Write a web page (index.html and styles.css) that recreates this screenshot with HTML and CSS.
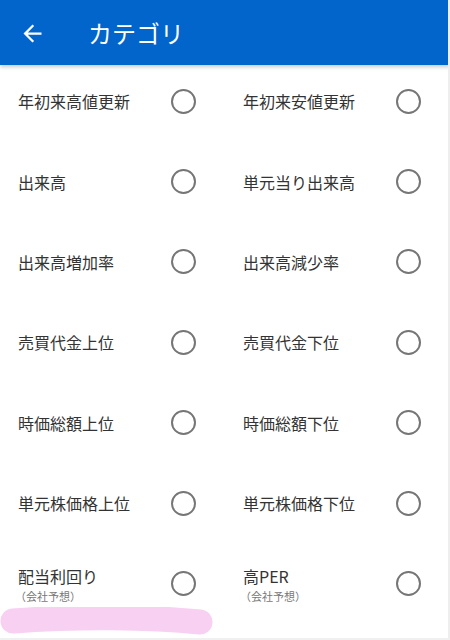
FILE: index.html
```html
<!DOCTYPE html>
<html lang="ja">
<head>
<meta charset="utf-8">
<link rel="stylesheet" href="styles.css">
</head>
<body>
<div class="app">
  <header class="bar">
    <svg class="back" viewBox="0 0 24 24" aria-hidden="true"><path d="M20 11H7.83l5.59-5.59L12 4l-8 8 8 8 1.41-1.41L7.83 13H20v-2z" fill="#fff"/></svg>
    <h1 class="title">カテゴリ</h1>
  </header>
  <main class="list">
    <div class="cell"><div class="label"><div class="main">年初来高値更新</div></div><span class="radio"></span></div>
    <div class="cell"><div class="label"><div class="main">年初来安値更新</div></div><span class="radio"></span></div>
    <div class="cell"><div class="label"><div class="main">出来高</div></div><span class="radio"></span></div>
    <div class="cell"><div class="label"><div class="main">単元当り出来高</div></div><span class="radio"></span></div>
    <div class="cell"><div class="label"><div class="main">出来高増加率</div></div><span class="radio"></span></div>
    <div class="cell"><div class="label"><div class="main">出来高減少率</div></div><span class="radio"></span></div>
    <div class="cell"><div class="label"><div class="main">売買代金上位</div></div><span class="radio"></span></div>
    <div class="cell"><div class="label"><div class="main">売買代金下位</div></div><span class="radio"></span></div>
    <div class="cell"><div class="label"><div class="main">時価総額上位</div></div><span class="radio"></span></div>
    <div class="cell"><div class="label"><div class="main">時価総額下位</div></div><span class="radio"></span></div>
    <div class="cell"><div class="label"><div class="main">単元株価格上位</div></div><span class="radio"></span></div>
    <div class="cell"><div class="label"><div class="main">単元株価格下位</div></div><span class="radio"></span></div>
    <div class="cell"><div class="label two"><div class="main">配当利回り</div><div class="sub">（会社予想）</div></div><span class="radio"></span></div>
    <div class="cell"><div class="label two"><div class="main">高PER</div><div class="sub">（会社予想）</div></div><span class="radio"></span></div>
  </main>
  <svg class="marker" viewBox="0 0 220 40" aria-hidden="true"><path d="M13 14 C 80 9, 150 10, 200 15" stroke="#f7d0f2" stroke-width="25" stroke-linecap="round" fill="none"/></svg>
</div>
</body>
</html>
```
FILE: styles.css
```css
html, body {
  margin: 0;
  padding: 0;
  background: #fff;
}
.app {
  position: relative;
  width: 450px;
  height: 640px;
  overflow: hidden;
  box-sizing: border-box;
  border-right: 2px solid #eeeeee;
  border-bottom: 2px solid #f0f0f0;
  font-family: "Noto Sans CJK JP", "Noto Sans", sans-serif;
}
.bar {
  height: 65px;
  background: #0165cc;
  display: flex;
  align-items: center;
  box-shadow: 0 2px 4px rgba(0,0,0,0.22);
  position: relative;
  z-index: 1;
  margin-right: -2px;
}
.back {
  width: 27px;
  height: 27px;
  margin-left: 19px;
  margin-top: 1px;
}
.title {
  margin: 0 0 0 42px;
  font-size: 24px;
  font-weight: 400;
  color: #fff;
  line-height: 30px;
}
.list {
  display: grid;
  grid-template-columns: 225px 225px;
  grid-auto-rows: 80.4px;
}
.cell {
  display: flex;
  align-items: center;
  justify-content: space-between;
  padding: 0 29px 8px 18px;
}
.label {
  color: #333;
}
.main {
  font-size: 16px;
  line-height: 20px;
}
.label.two {
  margin-top: 3px;
}
.sub {
  font-size: 11px;
  line-height: 18px;
  color: #777;
  margin-top: 1px;
  margin-left: -3px;
}
.radio {
  width: 25px;
  height: 25px;
  box-sizing: border-box;
  border: 2px solid #767676;
  border-radius: 50%;
  flex: none;
}
.marker {
  position: absolute;
  left: 0;
  top: 607px;
  width: 220px;
  height: 40px;
}
```
